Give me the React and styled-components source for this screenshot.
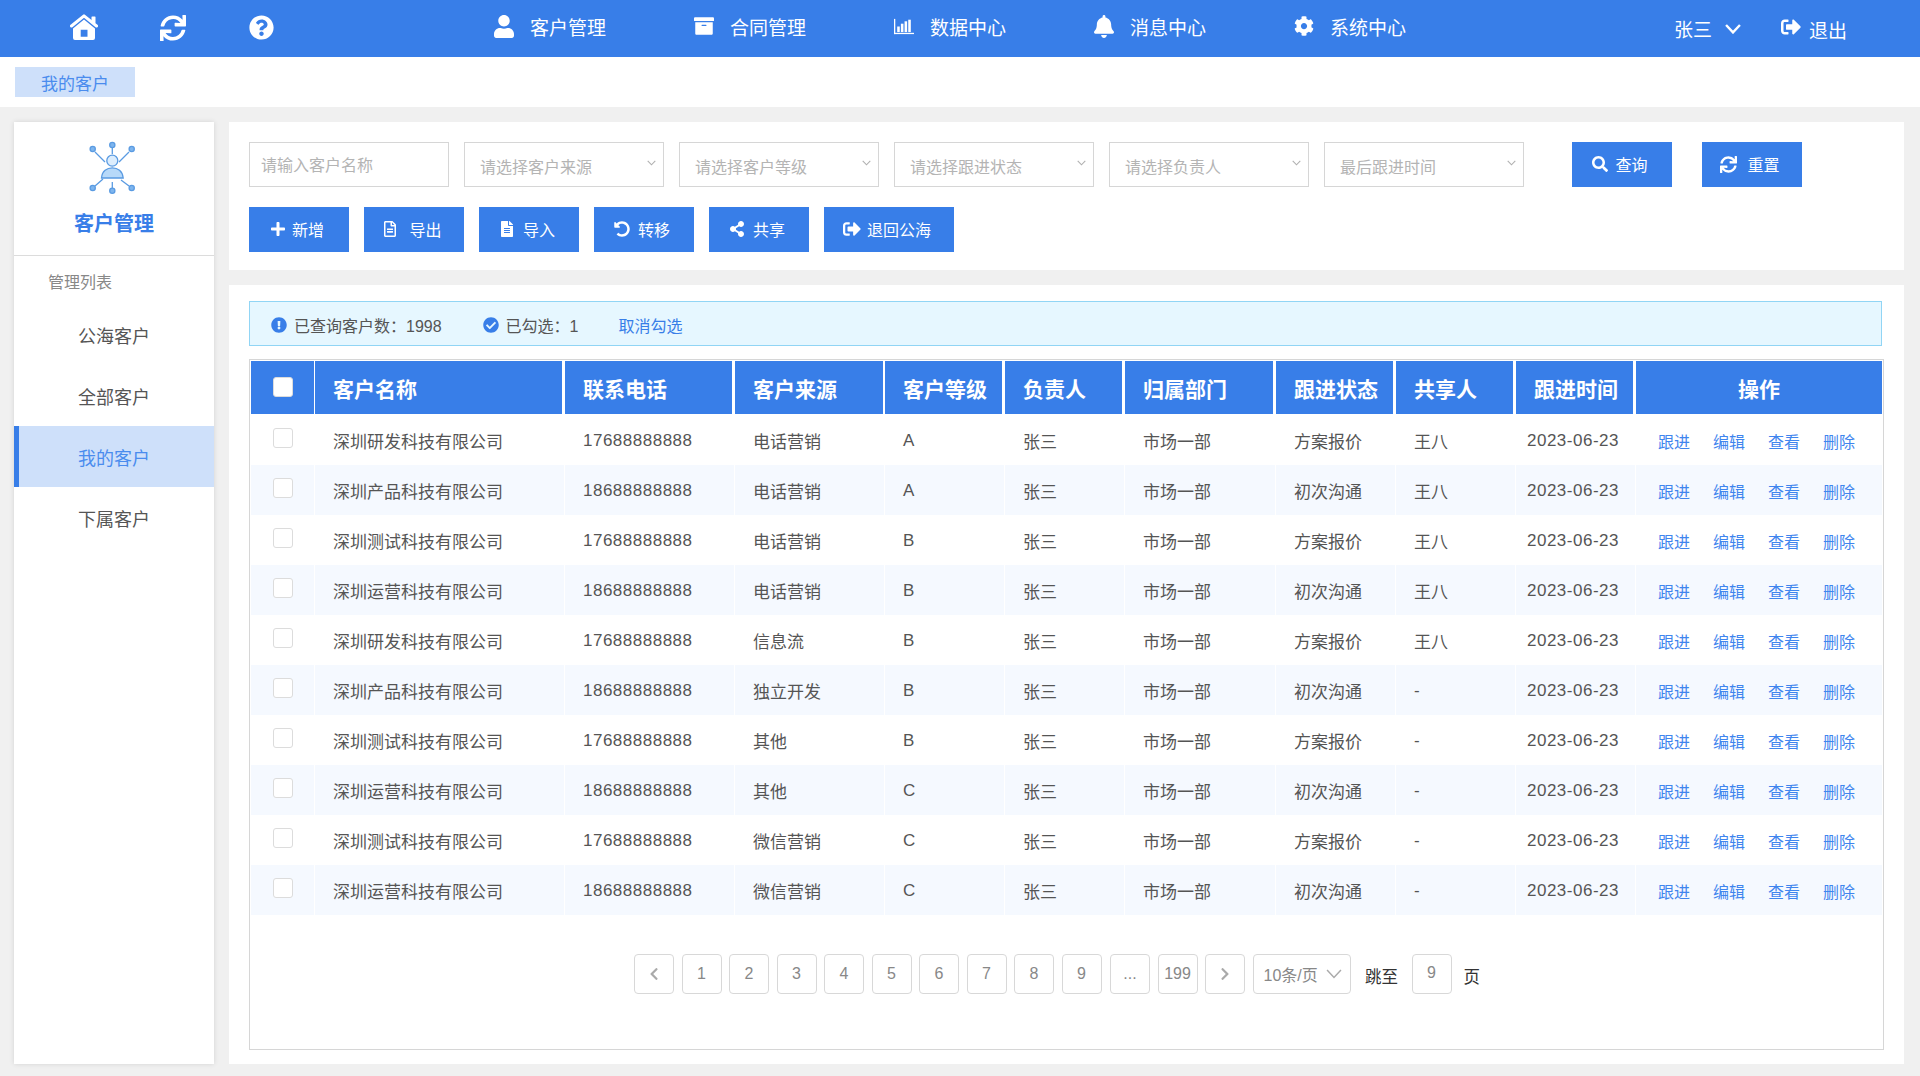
import React from "react";
import styled, { createGlobalStyle } from "styled-components";
import {
  FaSync, FaQuestionCircle, FaUser, FaArchive, FaBell, FaCog, FaSignOutAlt, FaSearch, FaPlus,
  FaRegFileAlt, FaFileAlt, FaUndoAlt, FaShareAlt, FaExclamationCircle, FaCheckCircle, FaChevronLeft, FaChevronRight,
} from "react-icons/fa";

const BLUE = "#387ee8";
const FONT = `"Liberation Sans", "Noto Sans CJK SC", sans-serif`;

const Global = createGlobalStyle`
  html, body { margin: 0; padding: 0; background: #f0f0f0; font-family: ${FONT}; color: #555; overflow: hidden; }
  * { box-sizing: border-box; }
`;

const Page = styled.div`width: 1920px; height: 1076px; display: flex; flex-direction: column;`;

const TopBar = styled.header`height: 57px; background: ${BLUE}; color: #fff; display: flex; align-items: center; flex: none;`;
const QuickIcons = styled.div`width: 494px; padding: 0 0 2px 39px; display: flex; align-items: center; flex: none;`;
const QuickIcon = styled.span`width: 89px; display: flex; justify-content: center; align-items: center;`;
const NavItem = styled.div`width: 200px; display: flex; align-items: center; font-size: 19px; flex: none; padding-bottom: 5px;`;
const NavIcon = styled.span`width: 20px; margin-right: 16px; display: flex; justify-content: center; flex: none;`;
const UserArea = styled.div`margin-left: auto; padding: 1px 73px 0 0; display: flex; align-items: center; font-size: 19px;`;
const UserName = styled.span`margin: -1px 13px 0 0;`;
const LogoutIcon = styled.span`display: flex; margin: -4px 8px 0 40px;`;

const CrumbBar = styled.div`height: 50px; background: #fff; padding: 10px 15px; flex: none;`;
const Crumb = styled.div`width: 120px; height: 30px; background: #cee0fa; color: #4a8cee; font-size: 17px; display: flex; align-items: center; justify-content: center;`;

const Body = styled.div`flex: 1; display: flex; gap: 15px; padding: 15px 16px 12px 14px; min-height: 0;`;
const Side = styled.aside`width: 200px; background: #fff; box-shadow: 0 0 5px rgba(0,0,0,.12); flex: none;`;
const Brand = styled.div`height: 134px; border-bottom: 1px solid #dcdcdc; padding-top: 16px; display: flex; flex-direction: column; align-items: center;`;
const BrandTitle = styled.div`color: ${BLUE}; font-weight: 700; font-size: 20px; line-height: 26px; padding-top: 1px;`;
const SideLabel = styled.div`height: 48px; padding: 13px 0 0 34px; font-size: 16px; line-height: 28px; color: #888;`;
const SideItem = styled.div`
  height: 61px; display: flex; align-items: center; justify-content: center; font-size: 18px;
  color: ${(p) => (p.$active ? "#4a8cee" : "#555")};
  background: ${(p) => (p.$active ? "#cee0fa" : "transparent")};
  border-left: 5px solid ${(p) => (p.$active ? BLUE : "transparent")};
  padding-right: 5px;
`;

const Main = styled.main`flex: 1; display: flex; flex-direction: column; gap: 15px; min-width: 0;`;
const FilterPanel = styled.section`height: 148px; background: #fff; padding: 20px 20px 0; flex: none;`;
const FilterRow = styled.div`display: flex; gap: 15px; height: 45px;`;
const ActionRow = styled.div`display: flex; gap: 15px; margin-top: 20px; height: 45px;`;
const TextInput = styled.input`
  width: 200px; height: 45px; border: 1px solid #d6d6d6; padding: 2px 11px 0; font: 16px ${FONT}; outline: none;
  &::placeholder { color: #b4b4b4; opacity: 1; }
`;
const SelectBox = styled.div`
  width: 200px; height: 45px; border: 1px solid #d6d6d6; padding: 3px 7px 0 15px;
  color: #b4b4b4; font-size: 16px; display: flex; align-items: center; justify-content: space-between;
`;
const Chevron = styled.svg`display: block; flex: none; margin-top: -7px;`;
const QueryButton = styled.button`
  width: 100px; height: 45px; border: 0; background: ${BLUE}; color: #fff; font: 16px ${FONT}; padding: 0 4px 1px 0;
  display: flex; align-items: center; justify-content: center; gap: ${(p) => p.$gap || 8}px; flex: none;
  margin-left: ${(p) => p.$ml || 0}px;
`;
const WideButton = styled(QueryButton)`width: 130px;`;

const TablePanel = styled.section`flex: 1; background: #fff; padding: 16px 20px 14px; display: flex; flex-direction: column; min-height: 0;`;
const InfoBar = styled.div`
  width: 1633px; height: 45px; background: #e6f7ff; border: 1px solid #91d5f5; display: flex; align-items: center;
  font-size: 16px; padding: 3px 0 0 21px; color: #555; flex: none;
`;
const InfoIcon = styled.span`display: flex; margin: 0 7px 0 0; color: ${BLUE};`;
const InfoText = styled.span`margin-right: ${(p) => p.$mr}px;`;
const InfoLink = styled.span`color: ${BLUE};`;

const TableBox = styled.div`margin-top: 13px; width: 1635px; height: 691px; border: 1px solid #d6d6d6; padding: 1px; display: flex; flex-direction: column;`;
const Table = styled.table`width: 1631px; table-layout: fixed; border-collapse: separate; border-spacing: 0;`;
const Th = styled.th`
  height: 53px; background: ${BLUE}; color: #fff; font-size: 21px; font-weight: 700; padding: 1px 0 0 18px;
  text-align: ${(p) => p.$align || "left"}; border-right: ${(p) => p.$gap}px solid #fff;
`;
const ActionTh = styled(Th)`padding-left: 0;`;
const CheckTh = styled(Th)`padding: 0 0 0 1px; text-align: center;`;
const Tr = styled.tr`background: ${(p) => (p.$alt ? "#f5f9ff" : "#fff")}; height: 50px; &:first-child { height: 51px; }`;
const Td = styled.td`
  padding: 1px 0 0 18px; font-size: 17px; color: #555; white-space: nowrap; border-right: 1px solid #fff; overflow: hidden;
  &:last-child { border-right: 0; }
`;
const NumTd = styled(Td)`padding-top: 2px; letter-spacing: .5px;`;
const TimeTd = styled(NumTd)`padding-left: 11px;`;
const CheckTd = styled(Td)`padding: 0 0 0 1px; text-align: center;`;
const OpTd = styled(Td)`padding: 2px 0 0 22px;`;
const Check = styled.span`
  display: inline-block; width: 20px; height: 20px; border: 1px solid #dcdcdc; border-radius: 3px; background: #fff;
  vertical-align: middle; position: relative; top: -2px;
`;
const Ops = styled.div`display: flex; gap: 23px;`;
const OpLink = styled.span`color: #3f85ee; font-size: 16px;`;

const Pager = styled.div`display: flex; align-items: flex-start; gap: 7.5px; padding: 39px 0 0 383px;`;
const PageBtn = styled.div`
  width: 40px; height: 40px; border: 1px solid #d8d8d8; border-radius: 4px; background: #fff; color: #888; font-size: 16px;
  display: flex; align-items: center; justify-content: center; flex: none;
`;
const GapPageBtn = styled(PageBtn)`margin-left: 1px;`;
const PageSize = styled(PageBtn)`width: 98px; justify-content: flex-start; padding-left: 10px; gap: 8px; white-space: nowrap;`;
const JumpLabel = styled.span`font-size: 16.5px; color: #333; line-height: 46px; margin: 0 6px 0 7px;`;
const PageEnd = styled.span`font-size: 16.5px; color: #333; line-height: 46px; margin-left: 4.5px;`;
const JumpInput = styled(PageBtn)`padding-bottom: 3px;`;

const HomeIcon = () => (
  <svg width="28" height="27" viewBox="0 0 28 27" fill="#fff">
    <path d="M1.5 12 14 1.8 26.5 12" fill="none" stroke="#fff" strokeWidth="3" strokeLinecap="round" strokeLinejoin="round" />
    <rect x="21.5" y="2.5" width="4" height="6.5" rx=".6" />
    <path fillRule="evenodd" d="M3 14.5 14 5.6l11 8.9V24a2 2 0 0 1-2 2H5a2 2 0 0 1-2-2ZM10.7 15.8v7h6.8v-7Z" />
  </svg>
);
const ChartIcon = () => (
  <svg width="25" height="19" viewBox="0 0 25 19" fill="#fff">
    <rect x="0" y="0" width="1.6" height="19" />
    <rect x="0" y="17.4" width="25" height="1.6" />
    <rect x="4" y="9.5" width="3.2" height="7" />
    <rect x="8.6" y="6" width="3.2" height="10.5" />
    <rect x="13.2" y="3" width="3.2" height="13.5" />
    <rect x="17.8" y="1" width="3.2" height="15.5" />
  </svg>
);
const Logo = () => (
  <svg width="90" height="72" viewBox="0 8 90 72">
    <g stroke="#5a9be2" strokeWidth="1.3" fill="none">
      <path d="M26 22 36 32M43.3 18V24M60 22 50 32M34 49 26 56M43.3 52V58M52 50 60 56" />
      <circle cx="23.7" cy="19" r="2.6" fill="#7eb5ee" />
      <circle cx="43.3" cy="15" r="2.6" fill="#7eb5ee" />
      <circle cx="62.7" cy="19" r="2.6" fill="#7eb5ee" />
      <circle cx="23.7" cy="58" r="2.6" fill="#7eb5ee" />
      <circle cx="43.3" cy="60.7" r="2.6" fill="#7eb5ee" />
      <circle cx="62.7" cy="58" r="2.6" fill="#7eb5ee" />
      <circle cx="43.3" cy="30.7" r="5.5" fill="#dcedfd" />
      <path d="M32.5 48C33 41 38 37.8 43.3 37.8S53.6 41 54.2 48Z" fill="#b7d9f9" />
    </g>
  </svg>
);
const SmallChevron = () => (
  <Chevron width="9" height="6" viewBox="0 0 9 6"><path d="M.7.8 4.5 4.8 8.3.8" fill="none" stroke="#b0b0b0" strokeWidth="1.1" /></Chevron>
);
const ThinChevron = ({ w, color, sw }) => (
  <svg width={w} height={w * 0.62} viewBox="0 0 16 10" style={{ display: "block" }}><path d="M1 1 8 8.5 15 1" fill="none" stroke={color} strokeWidth={sw} /></svg>
);

const nav = [
  [<FaUser size={23} />, "客户管理"],
  [<FaArchive size={20} />, "合同管理"],
  [<ChartIcon />, "数据中心"],
  [<FaBell size={23} />, "消息中心"],
  [<FaCog size={20} />, "系统中心"],
];
const filters = ["请选择客户来源", "请选择客户等级", "请选择跟进状态", "请选择负责人", "最后跟进时间"];
const cols = [
  ["客户名称", 250, 3], ["联系电话", 170, 3], ["客户来源", 150, 2], ["客户等级", 120, 3], ["负责人", 120, 3],
  ["归属部门", 151, 3], ["跟进状态", 120, 3], ["共享人", 120, 3],
];
const names = ["研发", "产品", "测试", "运营", "研发", "产品", "测试", "运营", "测试", "运营"];
const sources = ["电话营销", "电话营销", "电话营销", "电话营销", "信息流", "独立开发", "其他", "其他", "微信营销", "微信营销"];
const levels = ["A", "A", "B", "B", "B", "B", "B", "C", "C", "C"];

const rows = names.map((n, i) => ({
  name: `深圳${n}科技有限公司`,
  phone: i % 2 ? "18688888888" : "17688888888",
  source: sources[i],
  level: levels[i],
  status: i % 2 ? "初次沟通" : "方案报价",
  share: i < 5 ? "王八" : "-",
}));

export default function App() {
  return (
    <Page>
      <Global />
      <TopBar>
        <QuickIcons>
          <QuickIcon><HomeIcon /></QuickIcon>
          <QuickIcon><FaSync size={26} /></QuickIcon>
          <QuickIcon><FaQuestionCircle size={25} /></QuickIcon>
        </QuickIcons>
        {nav.map(([icon, label]) => (
          <NavItem key={label}><NavIcon>{icon}</NavIcon>{label}</NavItem>
        ))}
        <UserArea>
          <UserName>张三</UserName>
          <ThinChevron w={16} color="#fff" sw={2.4} />
          <LogoutIcon><FaSignOutAlt size={20} /></LogoutIcon>
          退出
        </UserArea>
      </TopBar>
      <CrumbBar><Crumb>我的客户</Crumb></CrumbBar>
      <Body>
        <Side>
          <Brand>
            <Logo />
            <BrandTitle>客户管理</BrandTitle>
          </Brand>
          <SideLabel>管理列表</SideLabel>
          <SideItem>公海客户</SideItem>
          <SideItem>全部客户</SideItem>
          <SideItem $active>我的客户</SideItem>
          <SideItem>下属客户</SideItem>
        </Side>
        <Main>
          <FilterPanel>
            <FilterRow>
              <TextInput placeholder="请输入客户名称" />
              {filters.map((f) => (
                <SelectBox key={f}>{f}<SmallChevron /></SelectBox>
              ))}
              <QueryButton $ml={33} $gap={7}><FaSearch size={16} />查询</QueryButton>
              <QueryButton $ml={15} $gap={10}><FaSync size={17} />重置</QueryButton>
            </FilterRow>
            <ActionRow>
              <QueryButton $gap={6}><FaPlus size={16} />新增</QueryButton>
              <QueryButton $gap={11}><FaRegFileAlt size={16} />导出</QueryButton>
              <QueryButton><FaFileAlt size={16} />导入</QueryButton>
              <QueryButton><FaUndoAlt size={16} />转移</QueryButton>
              <QueryButton><FaShareAlt size={16} />共享</QueryButton>
              <WideButton $gap={6}><FaSignOutAlt size={18} />退回公海</WideButton>
            </ActionRow>
          </FilterPanel>
          <TablePanel>
            <InfoBar>
              <InfoIcon><FaExclamationCircle size={16} /></InfoIcon>
              <InfoText $mr={41}>已查询客户数：1998</InfoText>
              <InfoIcon><FaCheckCircle size={16} /></InfoIcon>
              <InfoText $mr={40}>已勾选：1</InfoText>
              <InfoLink>取消勾选</InfoLink>
            </InfoBar>
            <TableBox>
              <Table>
                <colgroup>
                  <col style={{ width: 64 }} />
                  {cols.map(([h, w]) => <col key={h} style={{ width: w }} />)}
                  <col style={{ width: 120 }} />
                  <col style={{ width: 246 }} />
                </colgroup>
                <thead>
                  <tr>
                    <CheckTh $gap={1}><Check /></CheckTh>
                    {cols.map(([h, , g]) => <Th key={h} $gap={g}>{h}</Th>)}
                    <Th $gap={3}>跟进时间</Th>
                    <ActionTh $gap={0} $align="center">操作</ActionTh>
                  </tr>
                </thead>
                <tbody>
                  {rows.map((r, i) => (
                    <Tr key={i} $alt={i % 2 === 1}>
                      <CheckTd><Check /></CheckTd>
                      <Td>{r.name}</Td>
                      <NumTd>{r.phone}</NumTd>
                      <Td>{r.source}</Td>
                      <NumTd>{r.level}</NumTd>
                      <Td>张三</Td>
                      <Td>市场一部</Td>
                      <Td>{r.status}</Td>
                      <Td>{r.share}</Td>
                      <TimeTd>2023-06-23</TimeTd>
                      <OpTd>
                        <Ops>
                          <OpLink>跟进</OpLink><OpLink>编辑</OpLink><OpLink>查看</OpLink><OpLink>删除</OpLink>
                        </Ops>
                      </OpTd>
                    </Tr>
                  ))}
                </tbody>
              </Table>
              <Pager>
                <PageBtn><FaChevronLeft size={14} color="#aaa" /></PageBtn>
                {["1", "2", "3", "4", "5", "6", "7", "8", "9"].map((n) => <PageBtn key={n}>{n}</PageBtn>)}
                <GapPageBtn>...</GapPageBtn>
                <PageBtn>199</PageBtn>
                <PageBtn><FaChevronRight size={14} color="#aaa" /></PageBtn>
                <PageSize>10条/页<ThinChevron w={16} color="#aaa" sw={1.5} /></PageSize>
                <JumpLabel>跳至</JumpLabel>
                <JumpInput>9</JumpInput>
                <PageEnd>页</PageEnd>
              </Pager>
            </TableBox>
          </TablePanel>
        </Main>
      </Body>
    </Page>
  );
}
